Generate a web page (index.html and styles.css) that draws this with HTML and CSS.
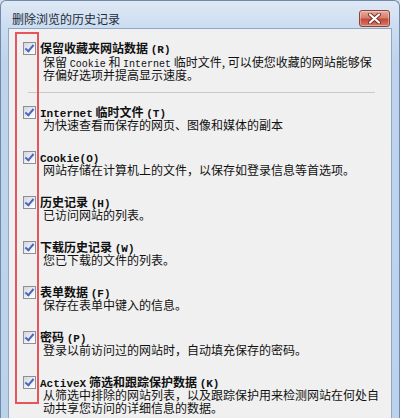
FILE: index.html
```html
<!DOCTYPE html>
<html lang="zh-CN">
<head>
    <meta charset="UTF-8">
    <title>删除浏览的历史记录</title>
    <link rel="stylesheet" href="styles.css">
</head>
<body>
    <div class="window">
        <div class="titlebar">
            <span class="caption">删除浏览的历史记录</span>
            <div class="close-btn">
                <svg width="15" height="11" viewBox="0 0 15 11">
                    <path d="M3 1.5 L12 9.5 M12 1.5 L3 9.5" stroke="#7a2a20" stroke-width="4" stroke-linecap="round"/>
                    <path d="M3 1.5 L12 9.5 M12 1.5 L3 9.5" stroke="#fff" stroke-width="2.2" stroke-linecap="round"/>
                </svg>
            </div>
        </div>

        <div class="panel">
            <!-- 红框标注 -->
            <div class="mark"></div>

            <div class="item first">
                <span class="check"></span>
                <div class="text">
                    <div class="title">保留收藏夹网站数据 <span class="en">(R)</span></div>
                    <div class="desc">保留 <span class="en">Cookie</span> 和 <span class="en">Internet</span> 临时文件, 可以使您收藏的网站能够保<br>存偏好选项并提高显示速度。</div>
                </div>
            </div>
            <div class="separator"></div>

            <div class="item">
                <span class="check"></span>
                <div class="text">
                    <div class="title"><span class="en">Internet</span> 临时文件 <span class="en">(T)</span></div>
                    <div class="desc">为快速查看而保存的网页、图像和媒体的副本</div>
                </div>
            </div>

            <div class="item">
                <span class="check"></span>
                <div class="text">
                    <div class="title"><span class="en">Cookie(O)</span></div>
                    <div class="desc">网站存储在计算机上的文件，以保存如登录信息等首选项。</div>
                </div>
            </div>

            <div class="item">
                <span class="check"></span>
                <div class="text">
                    <div class="title">历史记录 <span class="en">(H)</span></div>
                    <div class="desc">已访问网站的列表。</div>
                </div>
            </div>

            <div class="item">
                <span class="check"></span>
                <div class="text">
                    <div class="title">下载历史记录 <span class="en">(W)</span></div>
                    <div class="desc">您已下载的文件的列表。</div>
                </div>
            </div>

            <div class="item">
                <span class="check"></span>
                <div class="text">
                    <div class="title">表单数据 <span class="en">(F)</span></div>
                    <div class="desc">保存在表单中键入的信息。</div>
                </div>
            </div>

            <div class="item">
                <span class="check"></span>
                <div class="text">
                    <div class="title">密码 <span class="en">(P)</span></div>
                    <div class="desc">登录以前访问过的网站时，自动填充保存的密码。</div>
                </div>
            </div>

            <div class="item">
                <span class="check"></span>
                <div class="text">
                    <div class="title"><span class="en">ActiveX</span> 筛选和跟踪保护数据 <span class="en">(K)</span></div>
                    <div class="desc">从筛选中排除的网站列表，以及跟踪保护用来检测网站在何处自<br>动共享您访问的详细信息的数据。</div>
                </div>
            </div>
        </div>
    </div>
</body>
</html>
```

FILE: styles.css
```css
html, body {
    margin: 0;
    padding: 0;
    background-color: #d4dfeb;
}
body {
    width: 400px;
    height: 418px;
    overflow: hidden;
    font-family: "Noto Sans CJK SC", sans-serif;
    font-size: 12px;
    color: #111;
}
.window {
    height: 418px;
    box-sizing: border-box;
    display: flex;
    flex-direction: column;
    background: linear-gradient(#dfe8f5 0, #cadcf0 28px, #bfd4ec 60px, #bcd2eb 100%);
    border: 1px solid #6f8aab;
    border-bottom: none;
    border-radius: 6px 6px 0 0;
}
.titlebar {
    height: 27px;
    box-sizing: border-box;
    padding: 8px 9px 0 11px;
    display: flex;
    align-items: center;
    justify-content: space-between;
}
.caption {
    color: #1e2a38;
    font-size: 12px;
    line-height: 20px;
}
.close-btn {
    width: 31px;
    height: 17px;
    box-sizing: border-box;
    border: 1px solid #8a4338;
    border-radius: 3px;
    background: linear-gradient(#e7a99c 0%, #d5806f 45%, #c4493a 55%, #d77a66 100%);
    display: flex;
    align-items: center;
    justify-content: center;
    box-shadow: inset 0 0 0 1px rgba(255, 255, 255, 0.35);
}
.close-btn svg {
    display: block;
}
.panel {
    position: relative;
    flex: 1;
    min-height: 0;
    overflow: hidden;
    margin: 0 7px 0 7px;
    padding: 12px 14px 0 14px;
    background-color: #f0f0f0;
    border: 1px solid #8fa7c4;
    border-bottom: none;
}
.mark {
    position: absolute;
    left: 6px;
    top: 3px;
    width: 20px;
    height: 368px;
    border: 2px solid #e5555b;
}
.item {
    display: flex;
    gap: 4px;
    margin-bottom: 19px;
}
.item.first {
    margin-bottom: 0;
}
.check {
    position: relative;
    flex-shrink: 0;
    width: 13px;
    height: 13px;
    box-sizing: border-box;
    margin-top: 1px;
    border: 1px solid #8e8f94;
    background: linear-gradient(135deg, #d4d6dc, #f4f5f7 70%, #ffffff);
}
.check::after {
    content: "";
    position: absolute;
    left: 3px;
    top: 0px;
    width: 3px;
    height: 7px;
    border-right: 2px solid #4a66c0;
    border-bottom: 2px solid #4a66c0;
    transform: rotate(40deg);
}
.text {
    white-space: nowrap;
}
.title {
    font-weight: bold;
    height: 13px;
    line-height: 13px;
}
.title .en {
    font-family: "Liberation Mono", monospace;
    font-size: 11px;
    line-height: 0;
}
.desc {
    line-height: 13px;
    padding-left: 3px;
}
.desc .en {
    font-family: "Liberation Mono", monospace;
    font-size: 10px;
    line-height: 0;
}
.item.first .desc {
    margin-top: 1px;
}
.separator {
    width: 347px;
    height: 1px;
    margin: 11px 0 12px 5px;
    background-color: #c9c9c9;
}
```
